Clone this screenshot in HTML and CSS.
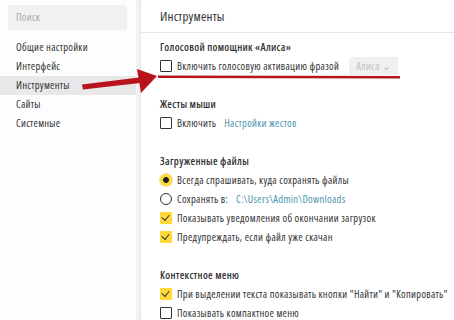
FILE: index.html
```html
<!DOCTYPE html>
<html lang="ru">
<head>
  <meta charset="UTF-8" />
  <title>Настройки</title>
  <link rel="stylesheet" href="styles.css">
</head>
<body>
  <div class="app">
    <aside class="sidebar">
      <div class="search">Поиск</div>
      <ul class="nav">
        <li>Общие настройки</li>
        <li>Интерфейс</li>
        <li class="active">Инструменты</li>
        <li>Сайты</li>
        <li>Системные</li>
      </ul>
    </aside>
    <div class="divider"></div>
    <main class="main">
      <h1 class="page-title">Инструменты</h1>
      <div class="content">
        <section class="group">
          <h2>Голосовой помощник «Алиса»</h2>
          <div class="row">
            <span class="check"></span>
            <span>Включить голосовую активацию фразой</span>
            <span class="select">Алиса <i>⌄</i></span>
          </div>
        </section>

        <section class="group">
          <h2>Жесты мыши</h2>
          <div class="row">
            <span class="check"></span>
            <span>Включить</span>
            <a class="link">Настройки жестов</a>
          </div>
        </section>

        <section class="group">
          <h2>Загруженные файлы</h2>
          <div class="row">
            <span class="radio on"></span>
            <span>Всегда спрашивать, куда сохранять файлы</span>
          </div>
          <div class="row">
            <span class="radio"></span>
            <span>Сохранять в:</span>
            <a class="link">C:\Users\Admin\Downloads</a>
          </div>
          <div class="row">
            <span class="check on"></span>
            <span>Показывать уведомления об окончании загрузок</span>
          </div>
          <div class="row">
            <span class="check on"></span>
            <span>Предупреждать, если файл уже скачан</span>
          </div>
        </section>

        <section class="group">
          <h2>Контекстное меню</h2>
          <div class="row">
            <span class="check on"></span>
            <span>При выделении текста показывать кнопки "Найти" и "Копировать"</span>
          </div>
          <div class="row">
            <span class="check"></span>
            <span>Показывать компактное меню</span>
          </div>
        </section>
      </div>
    </main>
  </div>

  <!-- красная пометка поверх скриншота -->
  <svg class="markup" width="454" height="320" viewBox="0 0 454 320">
    <g fill="#b8141c" stroke="none">
      <polygon points="82,84.5 139,77.5 140,83 83,89.5" />
      <polygon points="157,76 137,69 141,93" />
      <polygon points="158,75.5 400,76 400,78.5 158,78" />
    </g>
  </svg>
</body>
</html>
```

FILE: styles.css
```css
:root {
  --text: #333333;
  --muted: #a8a8a8;
  --link: #4b95ad;
  --yellow: #ffd83a;
  --line: #e6e6e6;
}
* { box-sizing: border-box; }
body {
  margin: 0;
  font-family: 'Open Sans', Roboto, sans-serif;
  font-stretch: 75%;
  font-size: 10.5px;
  letter-spacing: 0.3px;
  color: var(--text);
  background: #ffffff;
  width: 454px;
  height: 320px;
  overflow: hidden;
  position: relative;
}
.app {
  display: grid;
  grid-template-columns: 136px 5px 1fr;
  height: 320px;
  overflow: hidden;
}
.sidebar {
  background: #fdfdfd;
  padding-top: 5px;
}
.search {
  margin: 0 9px 0 8px;
  height: 25px;
  line-height: 25px;
  padding-left: 8px;
  background: #f1f1f1;
  border-radius: 2px;
  color: var(--muted);
}
.nav {
  list-style: none;
  margin: 8px 0 0;
  padding: 0;
}
.nav li {
  height: 19px;
  line-height: 19px;
  padding-left: 16px;
  white-space: nowrap;
}
.nav li.active {
  background: #e8e8e8;
}
.divider {
  background: #f2f2f2;
  box-shadow: inset -1px 0 2px rgba(0,0,0,0.05);
}
.main {
  background: #ffffff;
  overflow: hidden;
  min-width: 0;
}
.page-title {
  margin: 0;
  height: 33px;
  line-height: 33px;
  padding-left: 19px;
  font-size: 13px;
  font-weight: normal;
  letter-spacing: 0.2px;
  border-bottom: 1px solid var(--line);
}
.content {
  padding: 5px 0 0 19px;
}
.group {
  margin-bottom: 20px;
}
.group h2 {
  margin: 0;
  height: 18px;
  line-height: 18px;
  font-size: 10.5px;
  font-weight: 600;
}
.row {
  display: flex;
  align-items: center;
  gap: 5px;
  height: 19px;
  white-space: nowrap;
}
.link {
  color: var(--link);
  margin-left: 3px;
}
.check {
  width: 12px;
  height: 12px;
  border: 1.5px solid #333;
  border-radius: 1px;
  flex: none;
  position: relative;
}
.check.on {
  border: none;
  background: var(--yellow);
}
.check.on::after {
  content: '';
  position: absolute;
  left: 3px;
  top: 1.5px;
  width: 3.5px;
  height: 6px;
  border: solid #333;
  border-width: 0 1.6px 1.6px 0;
  transform: rotate(40deg);
}
.radio {
  width: 12px;
  height: 12px;
  border: 1.5px solid #333;
  border-radius: 50%;
  flex: none;
}
.radio.on {
  border: none;
  background: radial-gradient(circle, #222 0 2.6px, var(--yellow) 3.2px);
  box-shadow: 0 0 0 1px #f3e08a;
}
.select {
  margin-left: 5px;
  height: 18px;
  line-height: 18px;
  padding: 0 7px;
  background: #f0f0f0;
  color: #c2c2c2;
}
.select i {
  font-style: normal;
}
.markup {
  position: absolute;
  left: 0;
  top: 0;
  pointer-events: none;
}
```
